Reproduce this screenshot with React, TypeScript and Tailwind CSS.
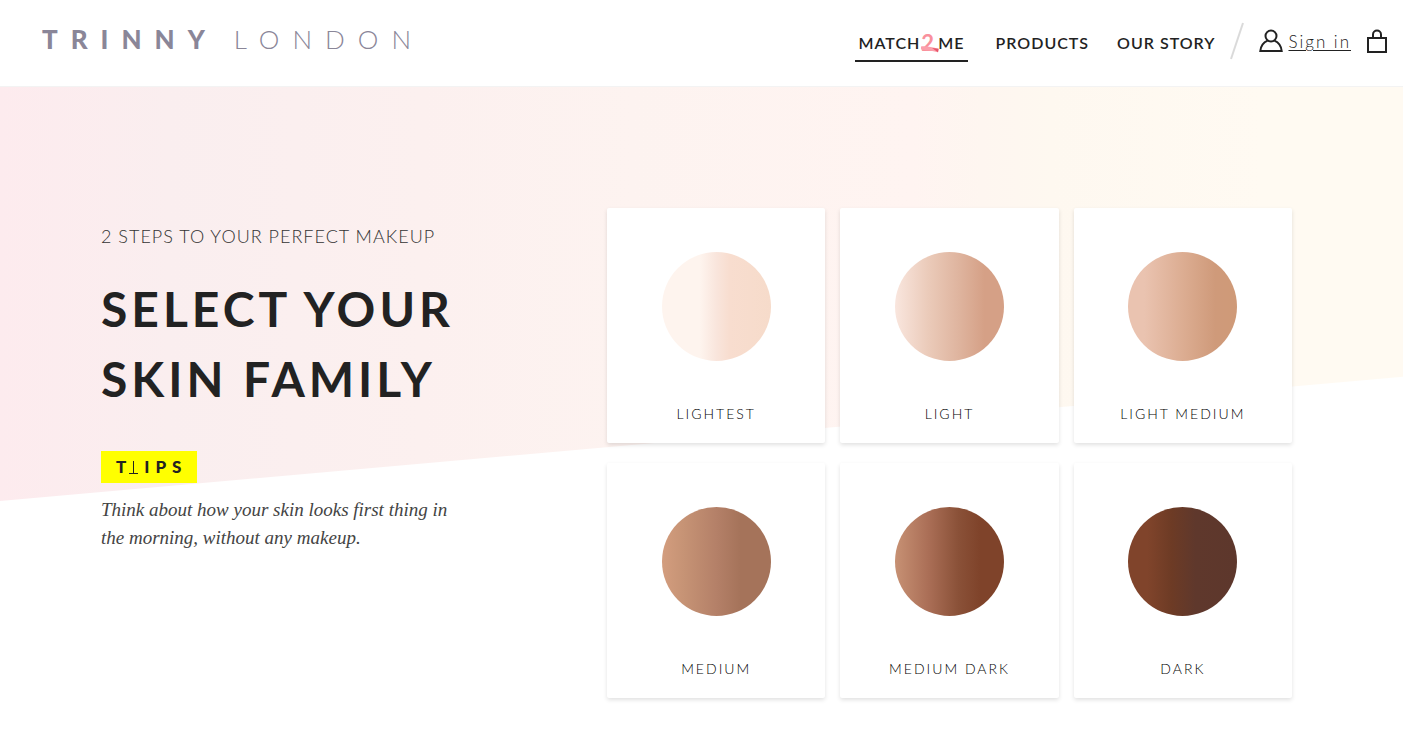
const families = [
  { name: "Lightest", tone: "bg-[linear-gradient(90deg,#fef4ee_0%,#fef4ee_35%,#f9e5dc_50%,#f8ddcf_62%,#f6dbca_100%)]" },
  { name: "Light", tone: "bg-[linear-gradient(90deg,#f9e6de_0%,#ebcbba_30%,#deb39d_60%,#d5a086_82%,#d5a086_100%)]" },
  { name: "Light Medium", tone: "bg-[linear-gradient(90deg,#eac3b0_0%,#eac3b0_15%,#dcad92_50%,#cf9a7a_80%,#cf9a78_100%)]" },
  { name: "Medium", tone: "bg-[linear-gradient(90deg,#d39d7e_0%,#c69375_20%,#b48068_50%,#a5735a_72%,#a5735a_100%)]" },
  { name: "Medium Dark", tone: "bg-[linear-gradient(90deg,#c79174_0%,#ab6f57_30%,#8a5138_58%,#7f432a_78%,#7f432a_100%)]" },
  { name: "Dark", tone: "bg-[linear-gradient(90deg,#80442b_0%,#80442b_18%,#6d3b25_40%,#5f382c_62%,#5d372c_100%)]" },
];

function Logo() {
  return (
    <a href="#" aria-label="Trinny London" className="flex items-center text-[26px] leading-8 text-[#8a8698]">
      <span className="font-black tracking-[13px]">TRINNY</span>
      <span className="ml-4 font-light tracking-[13px]">LONDON</span>
    </a>
  );
}

function Header() {
  return (
    <header className="flex h-[87px] items-start justify-between border-b border-[#f3f3f3] bg-white pl-[42px] pr-4 text-[#222]">
      <div className="pt-[23px]">
        <Logo />
      </div>
      <div className="flex items-start pt-[22px]">
        <nav className="flex gap-7 text-base font-semibold leading-6 tracking-[1px]">
          <a href="#" className="mt-[9px] flex border-b-2 border-[#222] px-[3px] pb-[5px]">
            <span>MATCH</span>
            <span className="relative h-6 w-[18px] pl-px text-[22px] font-bold leading-6 text-[#f9909c]">
              2
              <svg viewBox="0 0 20 8" className="absolute left-0 top-[14px] h-2 w-5" aria-hidden="true">
                <path d="M1 1.5 C6 1 12 2 18.5 3.8 L18 7.2 C12 5.6 6 5 1 4.5 Z" fill="#fb9fab" />
                <path d="M12 3 L18.7 3.8 L18 7.3 Z" fill="#e8566a" />
              </svg>
            </span>
            <span className="relative">ME</span>
          </a>
          <a href="#" className="mt-[9px]">PRODUCTS</a>
          <a href="#" className="mt-[9px]">OUR STORY</a>
        </nav>
        <svg viewBox="0 0 16 38" className="ml-[14px] h-[38px] w-4" aria-hidden="true">
          <path d="M2 37 L14 1" stroke="#dadada" strokeWidth="2" />
        </svg>
        <a href="#" className="ml-[14px] flex items-start gap-[5px] text-[17px]">
          <svg viewBox="0 0 24 24" className="mt-[7px] size-6" fill="none" stroke="#222" strokeWidth="2" aria-hidden="true">
            <circle cx="12" cy="7" r="5.5" />
            <path d="M8.6 11.6 C4.3 13.4 1.8 17 1.3 22 H22.7 C22.2 17 19.7 13.4 15.4 11.6" />
          </svg>
          <span className="mt-2 font-light leading-6 tracking-[2px] underline underline-offset-2 decoration-1">Sign in</span>
        </a>
        <button type="button" aria-label="Shopping bag" className="ml-4 mt-[7px]">
          <svg viewBox="0 0 20 24" className="h-6 w-5" fill="none" stroke="#222" strokeWidth="2" aria-hidden="true">
            <rect x="1" y="9" width="18" height="14" />
            <path d="M6 9 V5.5 A4 4 0 0 1 14 5.5 V9" />
          </svg>
        </button>
      </div>
    </header>
  );
}

function Tips() {
  return (
    <div className="flex h-8 w-24 items-center bg-[#ff0] pl-[15px] text-[17px] font-black leading-5 text-[#222]">
      <span>T</span>
      <svg viewBox="0 0 9 13" className="ml-[3px] mr-[6px] h-[13px] w-[9px]" aria-hidden="true">
        <path d="M4.5 0 V12 M0 12.5 H9" stroke="#222" fill="none" />
      </svg>
      <span className="tracking-[6px]">IPS</span>
    </div>
  );
}

export default function App() {
  return (
    <div className="min-h-screen bg-white font-['Lato',sans-serif]">
      <Header />
      <main className="grid">
        <div
          aria-hidden="true"
          className="col-start-1 row-start-1 h-[414px] bg-[linear-gradient(90deg,#fdebee_0%,#faeeef_12%,#fcf0ef_30%,#fdf3f0_45%,#fff4f1_65%,#fef6f0_70%,#fef8f0_75%,#fffaf2_90%)] [clip-path:polygon(0_0,100%_0,100%_70%,0_100%)]"
        />
        <div className="z-10 col-start-1 row-start-1 grid grid-cols-[506fr_685fr] pb-14 pl-[101px] pr-[111px] pt-[121px]">
          <section className="pt-4">
            <p className="text-lg font-light leading-6 tracking-[1px] text-[#333]">2 STEPS TO YOUR PERFECT MAKEUP</p>
            <h1 className="mt-[26px] text-5xl font-bold leading-[70px] tracking-[4px] text-[#222]">
              SELECT YOUR
              <br />
              SKIN FAMILY
            </h1>
            <div className="mt-[37px]">
              <Tips />
            </div>
            <p className="mt-[13px] max-w-[360px] font-['Liberation_Serif',serif] text-[19px] italic leading-7 text-[#444]">
              Think about how your skin looks first thing in the morning, without any makeup.
            </p>
          </section>
          <section aria-label="Skin families" className="grid grid-cols-3 items-start gap-x-[15px] gap-y-5">
            {families.map((family) => (
              <button
                key={family.name}
                type="button"
                className="flex flex-col items-center rounded-xs bg-white pb-[19px] pt-11 shadow-[0_2px_4px_rgba(0,0,0,0.12)]"
              >
                <span className={`aspect-square w-1/2 rounded-full ${family.tone}`} />
                <span className="mt-[43px] text-sm font-light leading-5 tracking-[2px] text-black uppercase">{family.name}</span>
              </button>
            ))}
          </section>
        </div>
      </main>
    </div>
  );
}
